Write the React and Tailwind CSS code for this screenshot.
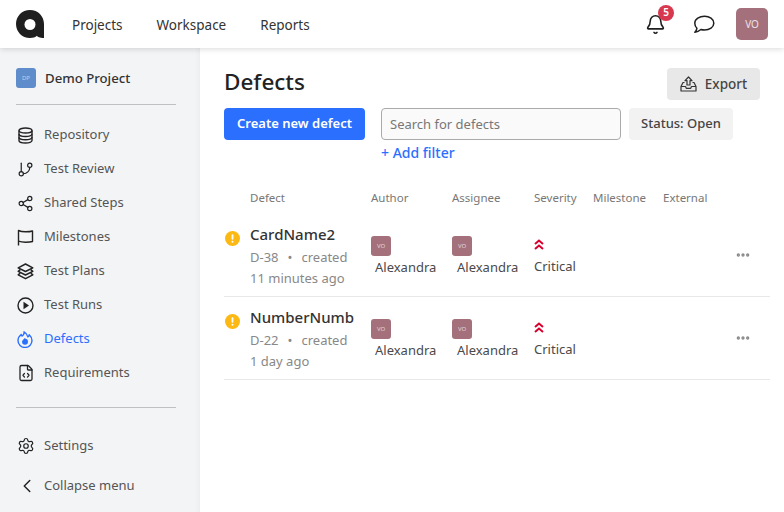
import { Bell, ChevronLeft, FileCode, GitBranch, MoreHorizontal, Settings, Share2 } from 'lucide-react';

const ink = '#222';

const Logo = () => (
  <svg width="29" height="28" viewBox="0 0 29 28">
    <path d="M14 0C6 0 0 6.200 0 14s6 14 14 14c3 0 5.400-.8 7-2.200.8 1.300 2.400 2.200 7 2.200V14C28 6.200 22 0 14 0z" fill="#1f1f1f" />
    <circle cx="14" cy="14.500" r="5.500" fill="#fff" />
  </svg>
);

const DatabaseIcon = () => (
  <svg width="17" height="17" viewBox="0 0 17 17" fill="none" stroke={ink} strokeWidth="1.400">
    <ellipse cx="8.500" cy="3.500" rx="6.500" ry="2.500" />
    <path d="M2 3.500v10c0 1.400 2.900 2.500 6.500 2.500s6.500-1.100 6.500-2.500v-10" />
    <path d="M2 7c0 1.400 2.900 2.500 6.500 2.500S15 8.400 15 7" />
    <path d="M2 10.300c0 1.400 2.900 2.500 6.500 2.500s6.500-1.100 6.500-2.500" />
  </svg>
);

const MilestoneIcon = () => (
  <svg width="17" height="17" viewBox="0 0 17 17" fill="none" stroke={ink} strokeWidth="1.400">
    <path d="M1.500 16.500V1.500c2 1 3.500 1.300 7 1.300s5.500-.3 7-.8v10.500c-1.500.5-3.500.7-7 .7s-5-.3-7-1" strokeLinejoin="round" />
  </svg>
);

const LayersIcon = () => (
  <svg width="17" height="17" viewBox="0 0 17 17" fill="none" stroke={ink} strokeWidth="1.500" strokeLinejoin="round">
    <path d="M8.500 1L1.200 4.800l7.300 3.700 7.300-3.700z" />
    <path d="M3.300 6.600L1.200 8.300l7.300 3.700 7.300-3.700-2.100-1.700" />
    <path d="M3.300 10.100l-2.100 1.700 7.300 3.900 7.300-3.900-2.100-1.700" />
  </svg>
);

const PlayIcon = () => (
  <svg width="17" height="17" viewBox="0 0 17 17">
    <circle cx="8.500" cy="8.500" r="7.500" fill="none" stroke={ink} strokeWidth="1.400" />
    <path d="M6.500 4.800l5.500 3.700-5.500 3.700z" fill={ink} />
  </svg>
);

const FlameIcon = () => (
  <svg width="16" height="17" viewBox="0 0 16 17">
    <path d="M7 .8c.4 2.200-.8 3.600-2 4.300-.4-.5-.6-1-.8-1.600C2.300 5 1 7 1 9.500a7 7 0 0 0 14 0c0-2.700-1.300-4.300-2.800-5.700-.2 1-.6 1.700-1.300 2.100C10.300 3.800 9 1.800 7 .8z" fill="none" stroke="#2b6fff" strokeWidth="1.400" strokeLinejoin="round" />
    <path d="M8 6.800c.3 1.200 1 1.500 1.900 1.300.7 1 1.100 1.700 1.100 2.700a3 3 0 0 1-6 0C5 9.200 7 8.500 8 6.800z" fill="#2b6fff" />
  </svg>
);

const ChatIcon = () => (
  <svg width="22" height="19" viewBox="0 0 22 19" fill="none" stroke="#1f1f1f" strokeWidth="1.500" strokeLinejoin="round">
    <path d="M11.500 1.200c5 0 9.300 3 9.300 7s-4.300 6.800-9.300 6.800c-1.300 0-2.500-.2-3.600-.5-1.400 1.200-3.400 2.500-6 2.800 1-1.200 1.800-2.500 2-4C2.600 12 1.800 10.200 1.800 8.200c0-4 4.700-7 9.700-7z" />
  </svg>
);

const ExportIcon = () => (
  <svg width="17" height="16" viewBox="0 0 17 16" fill="none" stroke="#333" strokeWidth="1.200" strokeLinejoin="round">
    <path d="M8.500 1L5 4.700h2V9h3V4.700h2z" />
    <path d="M4.500 6.500H3L1 10.500V15h15v-4.500L14 6.500h-1.500" />
    <path d="M1 10.500h4.500l.8 1.800h4.400l.8-1.800H16" />
  </svg>
);

const Warning = () => (
  <svg width="15" height="15" viewBox="0 0 15 15">
    <circle cx="7.500" cy="7.500" r="7.500" fill="#fdb913" />
    <rect x="6.600" y="3.300" width="1.800" height="5.400" rx="0.900" fill="#fff" />
    <circle cx="7.500" cy="10.800" r="1" fill="#fff" />
  </svg>
);

const Critical = () => (
  <svg width="10" height="11" viewBox="0 0 10 11" fill="none" stroke="#d8002f" strokeWidth="2">
    <path d="M1 5l4-3.500L9 5" />
    <path d="M1 10l4-3.500L9 10" />
  </svg>
);

const navItems = [
  ['Repository', <DatabaseIcon />],
  ['Test Review', <GitBranch size={17} strokeWidth={1.7} color={ink} />],
  ['Shared Steps', <Share2 size={17} strokeWidth={1.7} color={ink} />],
  ['Milestones', <MilestoneIcon />],
  ['Test Plans', <LayersIcon />],
  ['Test Runs', <PlayIcon />],
  ['Defects', <FlameIcon />, true],
  ['Requirements', <FileCode size={18} strokeWidth={1.7} color={ink} />],
];

const defects = [
  { name: 'CardName2', code: 'D-38', time: '11 minutes ago' },
  { name: 'NumberNumb', code: 'D-22', time: '1 day ago' },
];

const columns = 'grid grid-cols-[26px_121px_81px_82px_59px_70px_1fr_35px]';

function Person({ nameClass }) {
  return (
    <div className="flex flex-col items-start">
      <div className="w-5 h-5 rounded-[3px] bg-[#a4707c] text-white/70 text-[6px] flex items-center justify-center">VO</div>
      <span className={`${nameClass} mt-[2px] text-[13px] leading-[18px] text-[#4a4a4a]`}>Alexandra</span>
    </div>
  );
}

export default function App() {
  return (
    <div className="h-[512px] w-[784px] overflow-hidden flex flex-col bg-white font-['Noto_Sans',sans-serif]">
      <header className="relative z-10 h-12 shrink-0 flex items-center bg-white shadow-[0_1px_6px_rgba(0,0,0,0.15)] pl-4 pr-4">
        <Logo />
        <nav className="flex gap-[34px] ml-[27px] pt-[2px] text-[13.500px] text-[#333]">
          <span>Projects</span>
          <span>Workspace</span>
          <span>Reports</span>
        </nav>
        <div className="ml-auto flex items-center">
          <div className="relative mr-[27px]">
            <Bell size={21} strokeWidth={1.8} color="#1f1f1f" />
            <span className="absolute -top-[9px] left-[13px] w-4 h-4 rounded-full bg-[#d8384f] text-white text-[10px] font-semibold flex items-center justify-center">5</span>
          </div>
          <span className="mr-[21px]"><ChatIcon /></span>
          <div className="w-8 h-8 rounded-[5px] bg-[#a4707c] text-white/80 text-[10px] flex items-center justify-center">VO</div>
        </div>
      </header>

      <div className="flex flex-1 min-h-0">
        <aside className="w-[200px] shrink-0 bg-[#f3f4f6] shadow-[inset_-6px_0_6px_-6px_rgba(0,0,0,0.06)] pt-5 pl-4">
          <div className="flex items-center h-5 w-40">
            <div className="w-5 h-5 rounded-[3px] bg-[#5f8ccb] text-white/60 text-[6px] flex items-center justify-center">DP</div>
            <span className="ml-[9px] pt-[2px] text-[13.200px] font-medium text-[#333]">Demo Project</span>
          </div>
          <div className="w-40 h-px bg-[#bfc0c4] mt-4" />
          <nav className="mt-[13px]">
            {navItems.map(([label, icon, active]) => (
              <div key={label} className="flex items-center h-[34px]">
                <span className="w-[28px] flex justify-start pl-[1px]">{icon}</span>
                <span className={active ? 'text-[13px] text-[#2b6fff]' : 'text-[13px] text-[#555]'}>{label}</span>
              </div>
            ))}
          </nav>
          <div className="w-40 h-px bg-[#bfc0c4] mt-[17px]" />
          <div className="flex items-center h-[34px] mt-[21px]">
            <span className="w-[28px] pl-[1px]"><Settings size={18} strokeWidth={1.6} color={ink} /></span>
            <span className="text-[13px] text-[#555]">Settings</span>
          </div>
          <div className="flex items-center h-[34px] mt-[6px]">
            <span className="w-[28px]"><ChevronLeft size={22} strokeWidth={1.6} color={ink} /></span>
            <span className="text-[13px] text-[#555]">Collapse menu</span>
          </div>
        </aside>

        <main className="flex-1 min-w-0 pl-6 pr-[14px]">
          <div className="flex items-start justify-between pr-[10px] pt-5">
            <h1 className="text-[22.500px] leading-[28px] font-medium text-[#222]">Defects</h1>
            <button className="w-[93px] h-8 rounded-[4px] bg-[#e8e8e8] flex items-center justify-center gap-2 text-[13.500px] font-medium text-[#444]">
              <ExportIcon />
              Export
            </button>
          </div>
          <div className="flex items-start mt-2">
            <button className="w-[141px] h-8 rounded-[4px] bg-[#2b6fff] text-white text-[13px] font-semibold">Create new defect</button>
            <div className="ml-4">
              <input readOnly placeholder="Search for defects" className="block w-[240px] h-8 rounded-[4px] border border-[#aaa] bg-[#fafafa] px-2 text-[13px] text-[#333] placeholder:text-[#777] outline-none" />
              <div className="text-[14px] leading-[18px] mt-[4px] font-medium text-[#2b6fff]">+ Add filter</div>
            </div>
            <div className="ml-2 w-[104px] h-8 rounded-[4px] bg-[#f2f2f2] text-[13px] font-medium text-[#444] flex items-center justify-center">Status: Open</div>
          </div>

          <div className={`${columns} mt-5 h-8 items-center text-[11.500px] text-[#777]`}>
            <span />
            <span>Defect</span>
            <span>Author</span>
            <span>Assignee</span>
            <span>Severity</span>
            <span>Milestone</span>
            <span>External</span>
            <span />
          </div>
          {defects.map((d) => (
            <div key={d.code} className={`${columns} h-[83px] border-b border-[#e8e8e8] items-start`}>
              <div className="pt-[17px] pl-[1px]"><Warning /></div>
              <div className="pt-[9px]">
                <div className="text-[15px] leading-[22px] font-medium text-[#333]">{d.name}</div>
                <div className="text-[13px] leading-[21px] text-[#888] mt-[2px]">
                  {d.code}<span className="mx-[9px]">•</span>created
                </div>
                <div className="text-[13px] leading-[21px] text-[#888]">{d.time}</div>
              </div>
              <div className="pt-[22px]"><Person nameClass="ml-1" /></div>
              <div className="pt-[22px]"><Person nameClass="ml-[5px]" /></div>
              <div className="pt-[25px] flex flex-col items-start">
                <Critical />
                <span className="mt-[7px] text-[13px] leading-[18px] text-[#4a4a4a]">Critical</span>
              </div>
              <span />
              <span />
              <div className="pt-[33px] flex justify-start">
                <MoreHorizontal size={16} strokeWidth={3} color="#888" />
              </div>
            </div>
          ))}
        </main>
      </div>
    </div>
  );
}
